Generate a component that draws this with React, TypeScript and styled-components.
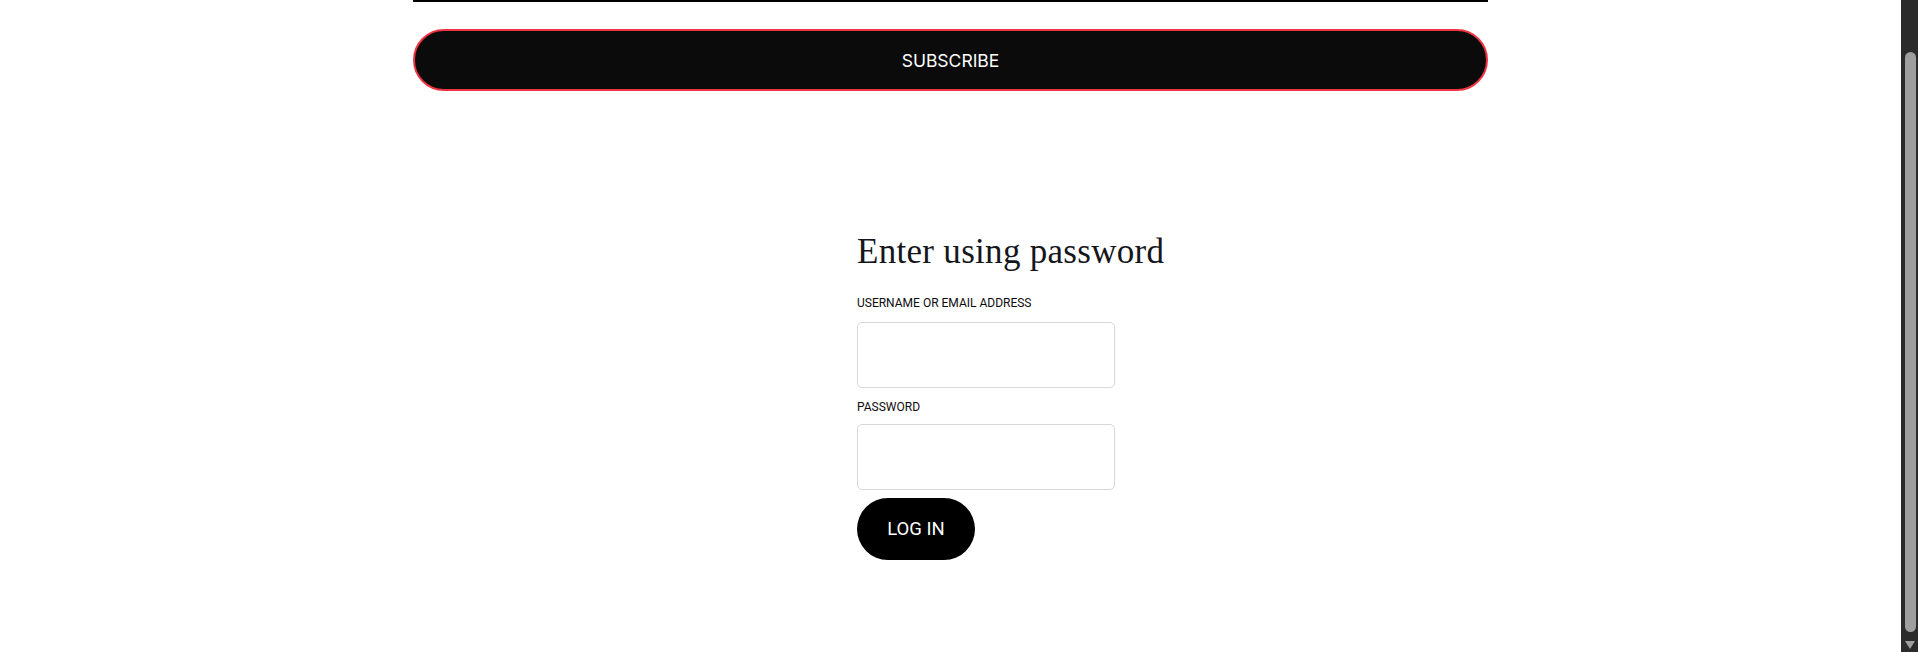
import { useEffect } from "react";
import styled, { createGlobalStyle } from "styled-components";

const GlobalStyle = createGlobalStyle`
    html, body {
        margin: 0;
        padding: 0;
        background-color: #FFFFFF;
        color: #111111;
    }
    body {
        padding-right: 17px;
    }
    * {
        box-sizing: border-box;
    }
`

export const Page = styled.div`
    width: 1075px;
    margin: 0 auto;
    display: flex;
    flex-direction: column;
    padding-bottom: 98px;
`

export const Newsletter = styled.form`
    display: flex;
    flex-direction: column;
    gap: 27px;
`

export const EmailInput = styled.input`
    height: 44px;
    width: 100%;
    border: none;
    border-bottom: 2px solid #000000;
    background-color: #FFFFFF;
    color: #111111;
    font-family: Inter, sans-serif;
    font-size: 16px;
    outline: none;
`

export const SubscribeButton = styled.button`
    height: 62px;
    width: 100%;
    border: 2px solid #EE3342;
    border-radius: 31px;
    background-color: #0B0B0B;
    color: #FFFFFF;
    font-family: Inter, "Liberation Sans", sans-serif;
    font-size: 17.5px;
    font-weight: 400;
    cursor: pointer;
`

export const LoginSection = styled.form`
    margin-top: 143px;
    margin-left: 444px;
    display: flex;
    flex-direction: column;
    align-items: flex-start;
`

export const Title = styled.h2`
    margin: 0;
    font-family: "Liberation Serif", serif;
    font-size: 35px;
    font-weight: 400;
    line-height: 35px;
    letter-spacing: 0.3px;
    color: #15161c;
`

export const Label = styled.label<{ $top: number }>`
    display: block;
    margin-top: ${p => p.$top}px;
    font-family: Roboto, sans-serif;
    font-size: 12px;
    line-height: 12px;
    color: #0c0c0c;
`

export const Field = styled.input<{ $top: number }>`
    margin-top: ${p => p.$top}px;
    width: 258px;
    height: 66px;
    border: 1px solid #D8D8D8;
    border-radius: 5px;
    background-color: #FFFFFF;
    color: #111111;
    padding: 0 14px;
    font-family: Roboto, sans-serif;
    font-size: 15px;
    outline: none;
`

export const LoginButton = styled.button`
    margin-top: 8px;
    width: 118px;
    height: 62px;
    border: none;
    border-radius: 31px;
    background-color: #000000;
    color: #FFFFFF;
    font-family: Roboto, sans-serif;
    font-size: 18.5px;
    cursor: pointer;
`

/* the browser's dark scrollbar seen in the screenshot */
export const ScrollTrack = styled.div`
    position: fixed;
    top: 0;
    right: 0;
    width: 17px;
    height: 100vh;
    background-color: #2B2B2B;
`

export const ScrollThumb = styled.div`
    position: absolute;
    top: 52px;
    left: 4px;
    width: 11px;
    height: 580px;
    border-radius: 6px;
    background-color: #9F9F9F;
`

export const ScrollArrow = styled.div`
    position: absolute;
    bottom: 3px;
    left: 4px;
    width: 0;
    height: 0;
    border-left: 5.5px solid transparent;
    border-right: 5.5px solid transparent;
    border-top: 8px solid #9F9F9F;
`

const App = () => {
    useEffect(() => {
        window.scrollTo(0, 42);
    }, []);

    return (
        <>
            <GlobalStyle />
            <Page>
                <Newsletter onSubmit={e => e.preventDefault()}>
                    <EmailInput type="email" aria-label="Email" />
                    <SubscribeButton type="submit">SUBSCRIBE</SubscribeButton>
                </Newsletter>
                <LoginSection onSubmit={e => e.preventDefault()}>
                    <Title>Enter using password</Title>
                    <Label $top={28}>USERNAME OR EMAIL ADDRESS</Label>
                    <Field $top={13} type="text" />
                    <Label $top={13}>PASSWORD</Label>
                    <Field $top={11} type="password" />
                    <LoginButton type="submit">LOG IN</LoginButton>
                </LoginSection>
            </Page>
            <ScrollTrack>
                <ScrollThumb />
                <ScrollArrow />
            </ScrollTrack>
        </>
    )
}

export default App;
